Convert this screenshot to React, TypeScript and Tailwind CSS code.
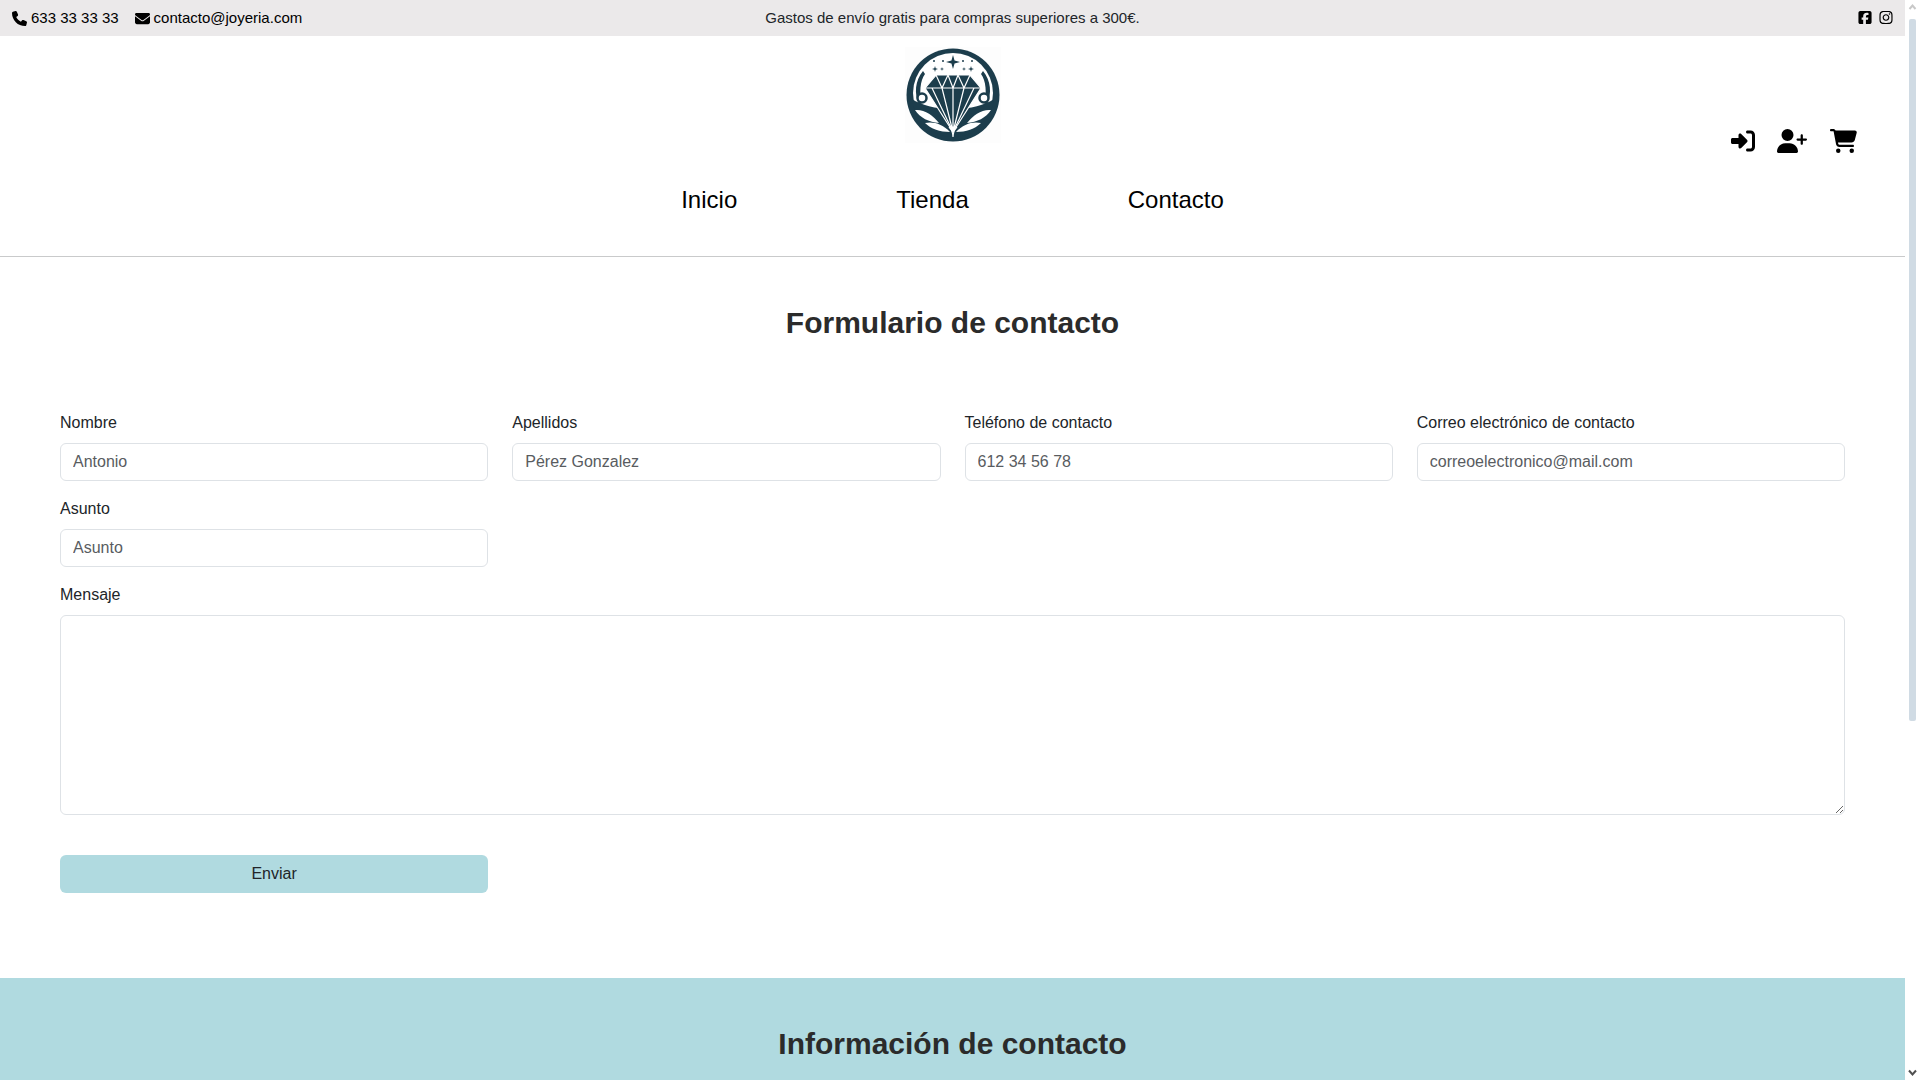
import React from "react";
import { FaPhone, FaEnvelope, FaSquareFacebook, FaInstagram, FaRightToBracket, FaUserPlus, FaCartShopping } from "react-icons/fa6";

const D = "#1c3d4c";

function Star({ x, y, r }: { x: number; y: number; r: number }) {
  const k = r * 0.22;
  return <path d={`M${x} ${y - r}L${x + k} ${y - k}L${x + r} ${y}L${x + k} ${y + k}L${x} ${y + r}L${x - k} ${y + k}L${x - r} ${y}L${x - k} ${y - k}Z`} fill={D} />;
}

function Logo() {
  return (
    <svg width="96" height="96" viewBox="0 0 96 96" className="block">
      <rect width="96" height="96" fill="#fdfdfd" />
      <circle cx="48" cy="48" r="46.5" fill={D} />
      <circle cx="48" cy="46" r="40" fill="#fff" />
      {/* dark lower field */}
      <path d="M7 52C16 58 30 62 48 62S80 58 89 52C86 76 68 90 48 90S10 76 7 52Z" fill={D} />
      {/* stars and dots */}
      <Star x={48} y={15} r={7} />
      <Star x={30} y={22} r={3} />
      <Star x={66} y={22} r={3} />
      <Star x={59} y={22} r={2} />
      <Star x={37} y={22} r={2} />
      <circle cx="29" cy="14" r="1" fill={D} />
      <circle cx="38" cy="14" r="1" fill={D} />
      <circle cx="58" cy="14" r="1" fill={D} />
      <circle cx="67" cy="14" r="1" fill={D} />
      {/* side laurels */}
      <path d="M18 24C10 34 9 46 14 58l3-2C14 46 15 34 20 27Z" fill={D} />
      <path d="M78 24C86 34 87 46 82 58l-3-2C82 46 81 34 76 27Z" fill={D} />
      <circle cx="17" cy="51" r="4.5" fill="#fff" stroke={D} strokeWidth="2.5" />
      <circle cx="79" cy="51" r="4.5" fill="#fff" stroke={D} strokeWidth="2.5" />
      {/* diamond */}
      <path d="M31 28H65L76 41L48 85L20 41Z" fill={D} stroke="#fff" strokeWidth="1.2" />
      <path d="M20 41H76M31 28L37 41L43 28L48 41L53 28L59 41L65 28M37 41L48 85L59 41M48 41V85M27 41L48 85M69 41L48 85" fill="none" stroke="#fff" strokeWidth="1.2" />
      {/* bottom leaves */}
      <path d="M10 63C19 62 28 68 34 76C24 75 15 71 10 63Z" fill="#fff" />
      <path d="M86 63C77 62 68 68 62 76C72 75 81 71 86 63Z" fill="#fff" />
      <path d="M20 76C28 74 38 77 45 85C35 85 26 82 20 76Z" fill="#fff" />
      <path d="M76 76C68 74 58 77 51 85C61 85 70 82 76 76Z" fill="#fff" />
      <path d="M48 90C48 86 46 82 44 80M48 90C48 86 50 82 52 80" fill="none" stroke="#fff" strokeWidth="1.2" />
    </svg>
  );
}

function Field({ label, value }: { label: string; value: string }) {
  return (
    <div className="flex flex-col">
      <label className="mb-[8px] h-[24px] text-[16px] leading-[24px] text-[#212529]">{label}</label>
      <input readOnly placeholder={value} className="h-[38px] w-full rounded-[6px] border border-[#dee2e6] bg-white px-[12px] text-[16px] text-[#212529] outline-none placeholder:text-[#595c5f]" />
    </div>
  );
}

export default function App() {
  return (
    <div className="flex h-[1080px] w-[1920px] overflow-hidden bg-white font-['Liberation_Sans',Arial,sans-serif] text-[#212529]">
      <main className="w-[1905px] shrink-0">
        <div className="grid h-[36px] grid-cols-3 items-center bg-[#ebe9ea] px-[12px] text-[15px] text-black">
          <div className="flex items-center gap-[16px]">
            <span className="flex items-center gap-[4px]"><FaPhone className="h-[15px] w-[15px]" />633 33 33 33</span>
            <span className="flex items-center gap-[4px]"><FaEnvelope className="h-[15px] w-[15px]" />contacto@joyeria.com</span>
          </div>
          <div className="text-center text-[#212529]">Gastos de envío gratis para compras superiores a 300€.</div>
          <div className="flex -translate-y-px items-center justify-end gap-[7px]">
            <FaSquareFacebook className="h-[15px] w-[14px]" />
            <FaInstagram className="h-[15px] w-[14px]" />
          </div>
        </div>
        <header className="relative h-[221px] border-b border-[#c9cacb]">
          <div className="flex justify-center pt-[11px]"><Logo /></div>
          <nav className="mt-[39px] flex justify-center text-[24px] leading-[36px] text-black">
            <a className="mr-[159px]">Inicio</a>
            <a className="mr-[159px]">Tienda</a>
            <a>Contacto</a>
          </nav>
          <div className="absolute left-[1731px] top-[93px] flex items-center gap-[22px] text-black">
            <FaRightToBracket className="h-[24px] w-[24px]" />
            <FaUserPlus className="h-[24px] w-[30px]" />
            <FaCartShopping className="ml-[1px] h-[24px] w-[27px]" />
          </div>
        </header>
        <section className="h-[721px] px-[60px]">
          <h1 className="pt-[48px] text-center text-[30px] font-bold leading-[36px] text-[#2b2b2b]">Formulario de contacto</h1>
          <div className="mt-[70px] grid grid-cols-4 gap-x-[24px] gap-y-[16px]">
            <Field label="Nombre" value="Antonio" />
            <Field label="Apellidos" value="Pérez Gonzalez" />
            <Field label="Teléfono de contacto" value="612 34 56 78" />
            <Field label="Correo electrónico de contacto" value="correoelectronico@mail.com" />
            <Field label="Asunto" value="Asunto" />
          </div>
          <div className="mt-[16px]">
            <label className="mb-[8px] block h-[24px] text-[16px] leading-[24px]">Mensaje</label>
            <textarea readOnly className="block h-[200px] w-full rounded-[6px] border border-[#dee2e6] bg-white outline-none" />
          </div>
          <div className="mt-[40px] grid grid-cols-4 gap-x-[24px]">
            <button className="h-[38px] rounded-[6px] bg-[#b0dae0] text-[16px] text-[#212529]">Enviar</button>
          </div>
        </section>
        <section className="h-[102px] bg-[#b0dae0] pt-[48px]">
          <h2 className="text-center text-[30px] font-bold leading-[36px] text-[#2b2b2b]">Información de contacto</h2>
        </section>
      </main>
      <div className="flex w-[15px] shrink-0 flex-col bg-white">
        <svg width="15" height="19" viewBox="0 0 15 19" className="shrink-0"><path d="M4.5 9L7.5 5.5L10.5 9" fill="none" stroke="#c8c8c8" strokeWidth="2" /></svg>
        <div className="ml-[4px] h-[702px] w-[7px] rounded-[2px] bg-[#d0dbe4]" />
        <div className="flex-1" />
        <svg width="15" height="15" viewBox="0 0 15 15" className="shrink-0"><path d="M4 5.5L7.5 9.5L11 5.5" fill="none" stroke="#505050" strokeWidth="2" /></svg>
      </div>
    </div>
  );
}
